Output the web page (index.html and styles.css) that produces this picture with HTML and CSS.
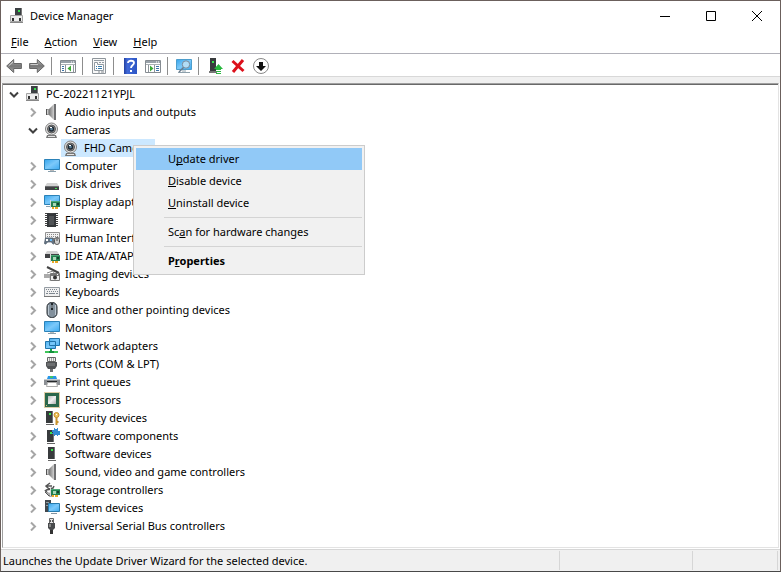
FILE: index.html
```html
<!DOCTYPE html>
<html lang="en">
<head>
<meta charset="utf-8">
<title>Device Manager</title>
<link rel="stylesheet" href="styles.css">
</head>
<body>
<svg class="sprite" aria-hidden="true">
  <defs>
    <linearGradient id="screen" x1="0" y1="0" x2="1" y2="1"><stop offset="0" stop-color="#35a5ec"/><stop offset=".5" stop-color="#7cc9fa"/><stop offset="1" stop-color="#3caaf0"/></linearGradient>
    <linearGradient id="metal" x1="0" y1="0" x2="1" y2="1"><stop offset="0" stop-color="#b9b9b9"/><stop offset=".5" stop-color="#f0f0f0"/><stop offset="1" stop-color="#b0b0b0"/></linearGradient>
    <linearGradient id="cone" x1="0" y1="0" x2="1" y2="0"><stop offset="0" stop-color="#777"/><stop offset="1" stop-color="#d0d0d0"/></linearGradient>
    <linearGradient id="arrow" x1="0" y1="0" x2="0" y2="1"><stop offset="0" stop-color="#bbb"/><stop offset=".5" stop-color="#777"/><stop offset="1" stop-color="#aaa"/></linearGradient>
    <linearGradient id="help" x1="0" y1="0" x2="1" y2="0"><stop offset="0" stop-color="#2340a0"/><stop offset=".25" stop-color="#4069d8"/><stop offset="1" stop-color="#2c55c4"/></linearGradient>
  </defs>
  <symbol id="i-open" viewBox="0 0 10 10"><path d="M1 3.500l4 4 4-4" fill="none" stroke="#404040" stroke-width="2"/></symbol>
  <symbol id="i-closed" viewBox="0 0 10 10"><path d="M3 1.500l4 4-4 4" fill="none" stroke="#a6a6a6" stroke-width="2"/></symbol>
  <symbol id="i-pc" viewBox="0 0 16 16"><path d="M6 0h7v9H6z" fill="#3c4043"/><path d="M12 0h1v9h-1z" fill="#777"/><path d="M9 2h2v2H9z" fill="#35e04e"/><path d="M1.500 7.500h12v6h-12z" fill="#ededed" stroke="#a4a4a4"/><path d="M3 10h2v3H3zM10 10h2v3h-2z" fill="#333"/><path d="M1 14h13v1H1z" fill="#888"/></symbol>
  <symbol id="i-speaker" viewBox="0 0 16 16"><path d="M2 5h3v6H2z" fill="#9a9a9a"/><path d="M2 5h1v6H2z" fill="#555"/><path d="M5 5l5-5v16l-5-5z" fill="url(#cone)"/><path d="M10 0h2v16h-2z" fill="#6f7072"/><path d="M3 6h1v4H3z" fill="#ccc"/></symbol>
  <symbol id="i-camera" viewBox="0 0 16 16"><path d="M3 13h9l1 3H2z" fill="#777"/><path d="M4 14h7v1H4z" fill="#e4e4e4"/><circle cx="7.500" cy="7" r="6" fill="#e4e4e4" stroke="#808080"/><circle cx="7.500" cy="7" r="4" fill="#8a8a8a" stroke="#555"/><circle cx="7.500" cy="7" r="2.700" fill="#1c2833"/><circle cx="7.500" cy="7" r="1.300" fill="#5f87a0"/><path d="M6 5h2v1H6z" fill="#fff"/></symbol>
  <symbol id="i-monitor" viewBox="0 0 16 16"><path d="M.5 1.500h15v10H.5z" fill="url(#screen)" stroke="#2b82b8"/><path d="M6 12h4v1H6z" fill="#bbb"/><path d="M4 13h8v1H4z" fill="#8aa0ad"/></symbol>
  <symbol id="i-disk" viewBox="0 0 16 16"><path d="M3 7h10l2 3H1z" fill="#d2d2d2"/><path d="M1 10h14v4H1z" fill="#414345"/><path d="M1 10h14v1H1z" fill="#6c6e70"/><path d="M11 12h2v1h-2z" fill="#42e052"/></symbol>
  <symbol id="i-card" viewBox="0 0 16 16"><path d="M7 7h9v6H7z" fill="#248151"/><path d="M7 7h9v1H7z" fill="#4ea878"/><path d="M9 9h3v3H9z" fill="#a8d9b6"/><path d="M13 9h2v2h-2z" fill="#173f2c"/><path d="M6 6h1v8H6z" fill="#d9d9d9"/><path d="M8 13h2v2H8zm3 0h3v2h-3z" fill="#e9a927"/></symbol>
  <symbol id="i-display" viewBox="0 0 16 16"><path d="M.5 1.500h15v9H.5z" fill="url(#screen)" stroke="#2b82b8"/><path d="M2 12h5v1H2z" fill="#8aa0ad"/><use href="#i-card"/></symbol>
  <symbol id="i-firmware" viewBox="0 0 16 16"><path d="M1 1.500h13M1 3.500h13M1 5.500h13M1 7.500h13M1 9.500h13M1 11.500h13M1 13.500h13" stroke="#444"/><path d="M3 1h2l1 1h3l1-1h2v14H3z" fill="#34373a"/><path d="M5 4h5v9H5z" fill="#505356"/></symbol>
  <symbol id="i-hid" viewBox="0 0 16 16"><path d="M1.500 2.500h14v6h-14z" fill="#f2f2f2" stroke="#929292"/><path d="M3 4.500h11M3 6.500h11" stroke="#888" stroke-dasharray="1 1"/><path d="M1.500 8h7.500l1.500 5c-1 2-2 1-3-1h-4c-1 2-3 3-3 1z" fill="#687785" stroke="#465565" stroke-width=".7"/><path d="M2 9h2v2H2z" fill="#fff"/><path d="M6 9h2v2H6z" fill="#65bcfa"/><rect x="10.500" y="7.500" width="5" height="7" rx="2.400" fill="#cecece" stroke="#555"/><path d="M13 8v3" stroke="#444"/></symbol>
  <symbol id="i-ide" viewBox="0 0 16 16"><path d="M3 3h10l2 3H1z" fill="#d2d2d2"/><path d="M1 6h14v4H1z" fill="#414345"/><use href="#i-card"/></symbol>
  <symbol id="i-imaging" viewBox="0 0 16 16"><path d="M3 1l12 6" stroke="#444" stroke-width="2"/><path d="M3 7l6-2 1 2" fill="none" stroke="#888"/><path d="M0 8h6v4H0z" fill="#aaa"/><path d="M5 12h4v3H5z" fill="#ddd"/><path d="M6.500 7.500h9v7h-9z" fill="#eee" stroke="#777"/><path d="M7 8h8v2H7z" fill="#777"/><circle cx="11" cy="11.500" r="2" fill="#333"/><path d="M13 8h1v1h-1z" fill="#fff"/></symbol>
  <symbol id="i-keyboard" viewBox="0 0 16 16"><path d="M.5 3.500h15v9H.5z" fill="#f0f0f0" stroke="#959ca3"/><path d="M2 5.500h12M3 7.500h12" stroke="#7e8790" stroke-dasharray="1 1"/><path d="M2 9.500h2m1 0h6m1 0h2" stroke="#7e8790"/><path d="M0 12.500h16" stroke="#777"/></symbol>
  <symbol id="i-mouse" viewBox="0 0 16 16"><rect x="3" y=".5" width="10" height="15" rx="4.500" fill="#83919d" stroke="#292e32"/><path d="M4.500 3v10M11.500 3v10" stroke="#bac6d0"/><path d="M8 1v7" stroke="#20262b" stroke-width="2"/><path d="M8 3v3" stroke="#c5d0d8"/></symbol>
  <symbol id="i-network" viewBox="0 0 16 16"><path d="M5.500.5h10v7h-10zM1.500 3.500h10v7h-10z" fill="url(#screen)" stroke="#2175ab"/><path d="M6 11h2v2H6z" fill="#16a448"/><path d="M1 14h13" stroke="#3fc55a" stroke-width="2"/><path d="M5 13h5v2H5z" fill="#148f3c"/></symbol>
  <symbol id="i-port" viewBox="0 0 16 16"><path d="M3.500 1.500h8v4h-8z" fill="#eee" stroke="#666"/><path d="M5 3h6M5 5h6" stroke="#555" stroke-dasharray="1 1"/><path d="M2 6h11v4l-2 3H4l-2-3z" fill="#515355"/><path d="M4 7v3m2-3v3m2-3v3m2-3v3" stroke="#8a8c8e"/><path d="M6 13h3v3H6z" fill="#6e7072"/></symbol>
  <symbol id="i-printer" viewBox="0 0 16 16"><path d="M3 5l1-3h8l1 3z" fill="#2897e7"/><path d="M6 2h3v2H6z" fill="#43c366"/><path d="M0 5h16v6H0z" fill="#8b8f94"/><path d="M0 5h16v1H0z" fill="#c9cdd0"/><path d="M3 7h10v1H3z" fill="#26292c"/><path d="M3.500 8.500h9l1 4h-11z" fill="#fff" stroke="#aaa"/></symbol>
  <symbol id="i-cpu" viewBox="0 0 16 16"><rect x=".5" y=".5" width="15" height="15" fill="none" stroke="#bd9a4e" stroke-dasharray="1 1"/><path d="M1 1h14v14H1z" fill="#2b684c"/><path d="M4 4h8v8H4z" fill="url(#metal)"/><path d="M2 13h1v1H2z" fill="#d9c176"/></symbol>
  <symbol id="i-tower" viewBox="0 0 16 16"><path d="M2 1h7v12H2z" fill="#383b3d"/><path d="M8 1h1v12H8z" fill="#717477"/><path d="M5 3h2v2H5z" fill="#38e64e"/><path d="M2 14h8v1H2z" fill="#666"/></symbol>
  <symbol id="i-security" viewBox="0 0 16 16"><use href="#i-tower"/><circle cx="12.500" cy="5" r="2.500" fill="#f1c663" stroke="#c38d28"/><path d="M12.500 7v8m0-3h2" fill="none" stroke="#c89430" stroke-width="2"/><path d="M12 4h1v1h-1z" fill="#fff"/></symbol>
  <symbol id="i-component" viewBox="0 0 16 16"><use href="#i-tower" x="1" y="1"/><path d="M10 0h1v1h2V0h1v3h2v4h-2v1h-1V7h-2v1h-1V6H8V5h1V4H8V2h2z" fill="#318bd2"/></symbol>
  <symbol id="i-device" viewBox="0 0 16 16"><use href="#i-tower" x="2" y="0"/></symbol>
  <symbol id="i-storage" viewBox="0 0 16 16"><path d="M6 1L2 4l3 3 4-1 1-2M2 4h6M1 8l3 4h4M2 8l6-1" fill="none" stroke="#555" stroke-width="1.500"/><path d="M1 10l4 4h3v-3" fill="#aaa" stroke="#555"/><use href="#i-card"/></symbol>
  <symbol id="i-system" viewBox="0 0 16 16"><path d="M1 0h6v12H1z" fill="#41484d"/><path d="M2 2h3v1H2zm0 3h3v1H2z" fill="#8e999f"/><path d="M4.500 3.500h11v8h-11z" fill="url(#screen)" stroke="#287bac"/><path d="M7 13.500h6" stroke="#8494a0"/></symbol>
  <symbol id="i-usb" viewBox="0 0 16 16"><path d="M5.500.5h4v5h-4z" fill="#e4e4e4" stroke="#666"/><path d="M6 2h1v2H6zm2 0h1v2H8z" fill="#555"/><path d="M4 5h7v5l-2 2H6l-2-2z" fill="#494b4d"/><path d="M5 6h2v3H5z" fill="#888"/><path d="M6 12h3v4H6z" fill="#333"/></symbol>
  <symbol id="i-back" viewBox="0 0 16 16"><path d="M.7 8l7-6.500v4h7.700v5H7.700v4z" fill="url(#arrow)" stroke="#666"/><path d="M2.500 8L7 4" stroke="#ccc"/></symbol>
  <symbol id="i-forward" viewBox="0 0 16 16"><path d="M15.300 8l-7-6.500v4H.6v5h7.700v4z" fill="url(#arrow)" stroke="#666"/><path d="M1.500 6.500H9" stroke="#ccc"/></symbol>
  <symbol id="i-panel" viewBox="0 0 16 16"><path d="M.5 2.500h15v12H.5z" fill="#fff" stroke="#858b91"/><path d="M1 3h14v2H1z" fill="#98a1a9"/><path d="M11 4h1m1 0h1" stroke="#fff"/><path d="M1 6.500h14" stroke="#aab0b5"/></symbol>
  <symbol id="i-tree" viewBox="0 0 16 16"><use href="#i-panel"/><path d="M5.500 7v7M13.500 7v7" stroke="#8e959b"/><path d="M2 8.500h2m-2 2h2m-2 2h2" stroke="#3c73a8"/><path d="M11 7.500v6L7.500 10.500z" fill="#39a935"/></symbol>
  <symbol id="i-action" viewBox="0 0 16 16"><use href="#i-panel"/><path d="M9.500 7v7M3.500 7v7" stroke="#8e959b"/><path d="M11 8.500h3m-3 2h3m-3 2h3" stroke="#3c73a8"/><path d="M5 7.500v6l3.500-3z" fill="#39a935"/></symbol>
  <symbol id="i-properties" viewBox="0 0 16 16"><path d="M1.500.5h13v15h-13z" fill="#f8f8f8" stroke="#8e959b"/><path d="M3 2.500h10" stroke="#929ba2"/><path d="M3.500 4.500h3v2h6v6h-9z" fill="#fff" stroke="#929ba2"/><path d="M8 4.500h2m1 0h2" stroke="#929ba2"/><path d="M5 8.500h1m1 0h4m-6 2h1m1 0h4" stroke="#397bab"/><path d="M7 14h2m1 0h3" stroke="#858b91"/></symbol>
  <symbol id="i-help" viewBox="0 0 16 16"><path d="M2 0h13v16H2z" fill="url(#help)"/><path d="M6 5c0-3 6-3 6 0 0 2-3 2-3 5" fill="none" stroke="#fff" stroke-width="1.800"/><path d="M8 12h2v2H8z" fill="#fff"/></symbol>
  <symbol id="i-scan" viewBox="0 0 16 16"><path d="M.5 1.500h15v10H.5z" fill="url(#screen)" stroke="#4d9ecd"/><path d="M2 14.500h12M6 13h4" stroke="#8da0ab"/><circle cx="10" cy="6.500" r="3.700" fill="#b1ddf7" stroke="#78899a"/><path d="M7.500 9.500L3 14" stroke="#68798a" stroke-width="1.500"/></symbol>
  <symbol id="i-update" viewBox="0 0 16 16"><path d="M3 0h6v13H3z" fill="#383b3d"/><path d="M2 13h8v2H2z" fill="#777"/><path d="M5 3h2v2H5z" fill="#38e64e"/><path d="M11.500 6l4.500 5h-2v1h-5v-1H7zM9 13h5v1H9zm0 2h5v1H9z" fill="#29b83f"/></symbol>
  <symbol id="i-remove" viewBox="0 0 16 16"><path d="M2.500 3l11 10M13 2L3 14" fill="none" stroke="#dc101b" stroke-width="3"/></symbol>
  <symbol id="i-disable" viewBox="0 0 16 16"><circle cx="8" cy="8" r="7.500" fill="#fff" stroke="#888"/><path d="M6 4h4v4h3l-5 5-5-5h3z" fill="#111"/></symbol>
</svg>

<div class="window">
  <header class="titlebar">
    <svg class="icon"><use href="#i-pc"/></svg>
    <h1 class="title">Device Manager</h1>
    <button class="control" aria-label="Minimize"><svg viewBox="0 0 10 10"><path d="M0 5.500h10"/></svg></button>
    <button class="control" aria-label="Maximize"><svg viewBox="0 0 10 10"><path d="M.5.5h9v9h-9z"/></svg></button>
    <button class="control" aria-label="Close"><svg viewBox="0 0 10 10"><path d="M0 0l10 10M10 0L0 10"/></svg></button>
  </header>

  <nav class="menubar">
    <button><span><u>F</u>ile</span></button>
    <button><span><u>A</u>ction</span></button>
    <button><span><u>V</u>iew</span></button>
    <button><span><u>H</u>elp</span></button>
  </nav>

  <div class="toolbar" role="toolbar">
    <button aria-label="Back"><svg class="icon"><use href="#i-back"/></svg></button>
    <button aria-label="Forward"><svg class="icon"><use href="#i-forward"/></svg></button>
    <span class="divider"></span>
    <button aria-label="Console tree"><svg class="icon"><use href="#i-tree"/></svg></button>
    <span class="divider"></span>
    <button aria-label="Properties"><svg class="icon"><use href="#i-properties"/></svg></button>
    <span class="divider"></span>
    <button aria-label="Help"><svg class="icon"><use href="#i-help"/></svg></button>
    <button aria-label="Action pane"><svg class="icon"><use href="#i-action"/></svg></button>
    <span class="divider"></span>
    <button aria-label="Scan for hardware changes"><svg class="icon"><use href="#i-scan"/></svg></button>
    <span class="divider"></span>
    <button aria-label="Update driver"><svg class="icon"><use href="#i-update"/></svg></button>
    <button aria-label="Uninstall device"><svg class="icon"><use href="#i-remove"/></svg></button>
    <button aria-label="Disable device"><svg class="icon"><use href="#i-disable"/></svg></button>
  </div>

  <main class="pane">
    <ul class="tree">
      <li>
        <div class="row"><button class="toggle" aria-label="Collapse"><svg><use href="#i-open"/></svg></button><svg class="icon"><use href="#i-pc"/></svg><span class="label">PC-20221121YPJL</span></div>
        <ul>
          <li><div class="row"><button class="toggle" aria-label="Expand"><svg><use href="#i-closed"/></svg></button><svg class="icon"><use href="#i-speaker"/></svg><span class="label">Audio inputs and outputs</span></div></li>
          <li>
            <div class="row"><button class="toggle" aria-label="Collapse"><svg><use href="#i-open"/></svg></button><svg class="icon"><use href="#i-camera"/></svg><span class="label">Cameras</span></div>
            <ul>
              <li class="anchor">
                <div class="row leaf"><span class="selected"><svg class="icon"><use href="#i-camera"/></svg><span class="label">FHD Camera</span></span></div>
                <div class="context" role="menu">
                  <button class="active" role="menuitem"><span>U<u>p</u>date driver</span></button>
                  <button role="menuitem"><span><u>D</u>isable device</span></button>
                  <button role="menuitem"><span><u>U</u>ninstall device</span></button>
                  <hr>
                  <button role="menuitem"><span>Sc<u>a</u>n for hardware changes</span></button>
                  <hr>
                  <button class="default" role="menuitem"><span>P<u>r</u>operties</span></button>
                </div>
              </li>
            </ul>
          </li>
          <li><div class="row"><button class="toggle" aria-label="Expand"><svg><use href="#i-closed"/></svg></button><svg class="icon"><use href="#i-monitor"/></svg><span class="label">Computer</span></div></li>
          <li><div class="row"><button class="toggle" aria-label="Expand"><svg><use href="#i-closed"/></svg></button><svg class="icon"><use href="#i-disk"/></svg><span class="label">Disk drives</span></div></li>
          <li><div class="row"><button class="toggle" aria-label="Expand"><svg><use href="#i-closed"/></svg></button><svg class="icon"><use href="#i-display"/></svg><span class="label">Display adapters</span></div></li>
          <li><div class="row"><button class="toggle" aria-label="Expand"><svg><use href="#i-closed"/></svg></button><svg class="icon"><use href="#i-firmware"/></svg><span class="label">Firmware</span></div></li>
          <li><div class="row"><button class="toggle" aria-label="Expand"><svg><use href="#i-closed"/></svg></button><svg class="icon"><use href="#i-hid"/></svg><span class="label">Human Interface Devices</span></div></li>
          <li><div class="row"><button class="toggle" aria-label="Expand"><svg><use href="#i-closed"/></svg></button><svg class="icon"><use href="#i-ide"/></svg><span class="label">IDE ATA/ATAPI controllers</span></div></li>
          <li><div class="row"><button class="toggle" aria-label="Expand"><svg><use href="#i-closed"/></svg></button><svg class="icon"><use href="#i-imaging"/></svg><span class="label">Imaging devices</span></div></li>
          <li><div class="row"><button class="toggle" aria-label="Expand"><svg><use href="#i-closed"/></svg></button><svg class="icon"><use href="#i-keyboard"/></svg><span class="label">Keyboards</span></div></li>
          <li><div class="row"><button class="toggle" aria-label="Expand"><svg><use href="#i-closed"/></svg></button><svg class="icon"><use href="#i-mouse"/></svg><span class="label">Mice and other pointing devices</span></div></li>
          <li><div class="row"><button class="toggle" aria-label="Expand"><svg><use href="#i-closed"/></svg></button><svg class="icon"><use href="#i-monitor"/></svg><span class="label">Monitors</span></div></li>
          <li><div class="row"><button class="toggle" aria-label="Expand"><svg><use href="#i-closed"/></svg></button><svg class="icon"><use href="#i-network"/></svg><span class="label">Network adapters</span></div></li>
          <li><div class="row"><button class="toggle" aria-label="Expand"><svg><use href="#i-closed"/></svg></button><svg class="icon"><use href="#i-port"/></svg><span class="label">Ports (COM &amp; LPT)</span></div></li>
          <li><div class="row"><button class="toggle" aria-label="Expand"><svg><use href="#i-closed"/></svg></button><svg class="icon"><use href="#i-printer"/></svg><span class="label">Print queues</span></div></li>
          <li><div class="row"><button class="toggle" aria-label="Expand"><svg><use href="#i-closed"/></svg></button><svg class="icon"><use href="#i-cpu"/></svg><span class="label">Processors</span></div></li>
          <li><div class="row"><button class="toggle" aria-label="Expand"><svg><use href="#i-closed"/></svg></button><svg class="icon"><use href="#i-security"/></svg><span class="label">Security devices</span></div></li>
          <li><div class="row"><button class="toggle" aria-label="Expand"><svg><use href="#i-closed"/></svg></button><svg class="icon"><use href="#i-component"/></svg><span class="label">Software components</span></div></li>
          <li><div class="row"><button class="toggle" aria-label="Expand"><svg><use href="#i-closed"/></svg></button><svg class="icon"><use href="#i-device"/></svg><span class="label">Software devices</span></div></li>
          <li><div class="row"><button class="toggle" aria-label="Expand"><svg><use href="#i-closed"/></svg></button><svg class="icon"><use href="#i-speaker"/></svg><span class="label">Sound, video and game controllers</span></div></li>
          <li><div class="row"><button class="toggle" aria-label="Expand"><svg><use href="#i-closed"/></svg></button><svg class="icon"><use href="#i-storage"/></svg><span class="label">Storage controllers</span></div></li>
          <li><div class="row"><button class="toggle" aria-label="Expand"><svg><use href="#i-closed"/></svg></button><svg class="icon"><use href="#i-system"/></svg><span class="label">System devices</span></div></li>
          <li><div class="row"><button class="toggle" aria-label="Expand"><svg><use href="#i-closed"/></svg></button><svg class="icon"><use href="#i-usb"/></svg><span class="label">Universal Serial Bus controllers</span></div></li>
        </ul>
      </li>
    </ul>
  </main>

  <footer class="status">
    <p class="message">Launches the Update Driver Wizard for the selected device.</p>
    <span class="cell wide"></span>
    <span class="cell"></span>
  </footer>
</div>
</body>
</html>
```
FILE: styles.css
```css
* {
  box-sizing: border-box;
}

body,
h1,
p,
ul {
  margin: 0;
  padding: 0;
}

body,
button {
  font: 11px/18px "Noto Sans", "Open Sans", sans-serif;
  color: #000;
}

button {
  display: flex;
  align-items: center;
  padding: 0;
  border: 0;
  background: none;
}

ul {
  list-style: none;
}

u {
  text-underline-offset: 1px;
  text-decoration-thickness: 1px;
  text-decoration-skip-ink: none;
}

.sprite {
  position: absolute;
  width: 0;
  height: 0;
}

.icon {
  flex: none;
  width: 16px;
  height: 16px;
}

.window {
  display: flex;
  flex-direction: column;
  min-height: 100vh;
  border: 1px solid #6b605c;
  border-bottom-color: #484848;
  background: #fff;
}

.titlebar {
  display: flex;
  align-items: center;
  height: 30px;
  padding-left: 8px;
}

.title {
  flex: 1;
  margin-left: 5px;
  font-size: 11px;
  font-weight: 400;
}

.control {
  justify-content: center;
  width: 46px;
  height: 30px;
}

.control svg {
  width: 10px;
  height: 10px;
  fill: none;
  stroke: #000;
}

.menubar {
  display: flex;
  height: 23px;
  padding-left: 2px;
  border-bottom: 1px solid #b0b0b8;
}

.menubar button {
  padding: 0 8px;
}

.toolbar {
  display: flex;
  align-items: center;
  height: 23px;
  padding: 2px 0 0 1px;
  border-bottom: 1px solid #d8d8d8;
}

.toolbar button {
  justify-content: center;
  width: 23px;
  height: 20px;
}

.divider {
  width: 8px;
  height: 18px;
  padding-left: 3px;
}

.divider::before {
  content: "";
  display: block;
  width: 1px;
  height: 100%;
  background: #8d8d8d;
}

.pane {
  display: flex;
  flex: 1;
  padding: 6px 1px 1px;
  background: linear-gradient(#f0f0f0 6px, #fff 6px);
}

.tree {
  flex: 1;
  border: 1px solid #a0a0a0;
  border-right-color: #e3e3e3;
  border-bottom-color: #e3e3e3;
  box-shadow: inset 0 1px #696969;
  padding-top: 1px;
}

.tree ul {
  padding-left: 19px;
}

.row {
  display: flex;
  align-items: center;
  height: 18px;
  padding-left: 5px;
}

.toggle {
  justify-content: center;
  width: 12px;
  height: 18px;
  margin-right: 5px;
}

.toggle svg {
  width: 10px;
  height: 10px;
}

.label {
  margin-left: 5px;
  white-space: nowrap;
}

.anchor {
  position: relative;
}

.leaf {
  padding-left: 20px;
}

.selected {
  display: flex;
  align-items: center;
  width: 94px;
  padding-left: 2px;
  background: #cce8ff;
}

.context {
  position: absolute;
  top: 6px;
  left: 92px;
  z-index: 1;
  width: 232px;
  padding: 2px;
  border: 1px solid #ccc;
  background: #f1f1f1;
}

.context button {
  width: 100%;
  height: 22px;
  padding-left: 32px;
}

.context .active {
  background: #91c9f7;
}

.context .default {
  font-weight: 700;
}

.context hr {
  height: 1px;
  margin: 3px 0 3px 28px;
  border: 0;
  background: #d4d4d4;
}

.status {
  display: flex;
  height: 22px;
  padding: 1px 2px 1px 1px;
  border-top: 1px solid #d6d6d6;
  background: #f0f0f0;
}

.message {
  flex: 1;
  padding-left: 1px;
  line-height: 20px;
  border-right: 1px solid #d6d6d6;
}

.cell {
  width: 85px;
  border-right: 1px solid #d6d6d6;
}

.wide {
  width: 133px;
}
```
